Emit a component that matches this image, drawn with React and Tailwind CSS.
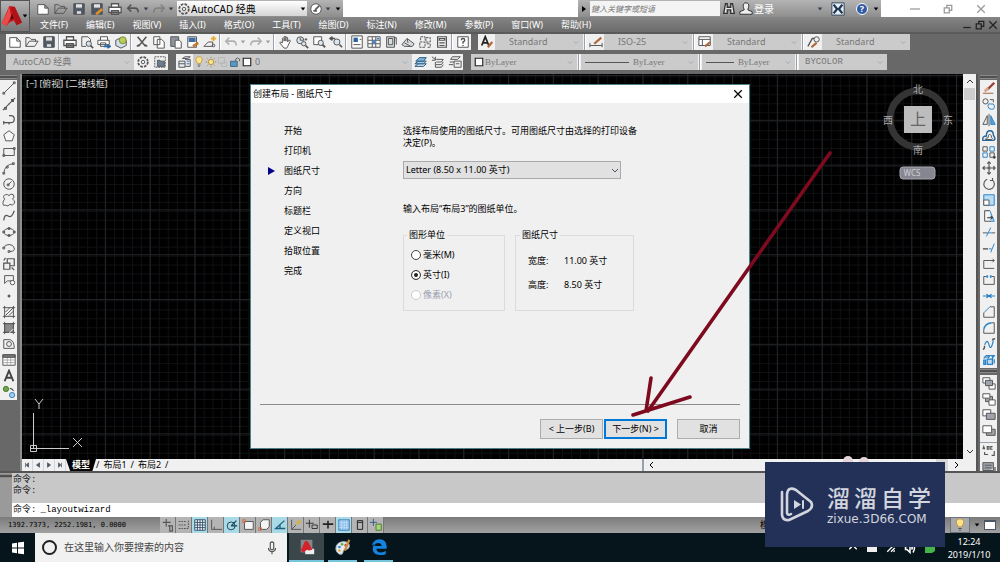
import React from 'react';

const icons = {
  newFile: <path d="M2 3h8l4 4v7H2zM10 3v4h4" fill="#fff" />,
  open: <path d="M1 13V3h4l2 2h5v3M1 13l4-6h10l-4 6z" />,
  save: (
    <g>
      <path d="M2 2h12v12H2z" fill="#4b5666" />
      <path d="M4 2h8v5H4zM5 10h6v4H5z" fill="#dfe3e8" />
    </g>
  ),
  saveAs: (
    <g>
      <path d="M2 2h12v12H2z" fill="#4b5666" />
      <path d="M4 2h8v5H4z" fill="#dfe3e8" />
      <path d="M7 14l7-6" stroke="#e0902b" strokeWidth="3" />
    </g>
  ),
  print: <path d="M4 6V2h8v4M1 6h14v6H1zM4 10h8v4H4z" fill="#fff" strokeWidth="1.5" />,
  preview: (
    <g>
      <path d="M2 2h7l3 3v3M2 2v11h5" />
      <circle cx="10" cy="10" r="3" fill="#cfe0ee" />
      <path d="M12 12l3 3" strokeWidth="2" />
    </g>
  ),
  publish: (
    <g>
      <path d="M4 6V2h8v4M1 6h13v5H1zM4 9h6v4H4z" fill="#fff" />
      <path d="M8 13h6M12 11l3 2-3 2" stroke="#2368a8" strokeWidth="2" />
    </g>
  ),
  web: (
    <g>
      <path d="M2 6l6-3 6 3v6l-6 3-6-3z" fill="#cfe0ee" />
      <circle cx="10" cy="6" r="4" fill="#b9cb58" stroke="#7c8c35" />
    </g>
  ),
  cut: <path d="M3 2l9 11M13 2L4 13M2 13l3-2M14 13l-3-2" strokeWidth="1.8" />,
  copyDoc: <path d="M2 2h7v9H2zM6 5h5l3 3v7H6z" fill="#fff" />,
  paste: (
    <g>
      <path d="M2 2h9v11H2z" fill="#8d949c" />
      <path d="M7 6h5l2 2v7H7z" fill="#fff" />
    </g>
  ),
  match: (
    <g>
      <path d="M2 2h10v12H2z" fill="#fff" />
      <path d="M3 3h8v5H3z" fill="#3f6da3" stroke="none" />
      <path d="M8 13l6-4" stroke="#c47b35" strokeWidth="3" />
    </g>
  ),
  blockEdit: (
    <g>
      <path d="M1 13h10V8H6M1 13l5-5" />
      <path d="M12 1v6M9 4h6" stroke="#e7a92e" strokeWidth="2" />
      <circle cx="12" cy="12" r="1.500" />
    </g>
  ),
  undo: <path d="M6 3L2 7l4 4M2 7h8q4 0 4 5" strokeWidth="1.800" />,
  redo: <path d="M10 3l4 4-4 4M14 7H6q-4 0-4 5" strokeWidth="1.800" />,
  pan: <path d="M5 9V4q1-2 2 0v3V2q1-1 2 0v5V3q1-1 2 0v5l1-2q2-1 2 1l-3 6-1 2H7L2 9q0-2 3 0z" fill="#fff" />,
  zoomRt: (
    <g>
      <circle cx="6" cy="6" r="4" fill="#dce6ee" />
      <path d="M6 3v3h3M11 5h3M12.500 3.500v3" />
      <circle cx="10" cy="10" r="2.500" fill="#dce6ee" />
      <path d="M12 12l3 3" strokeWidth="2" />
    </g>
  ),
  zoomWin: (
    <g>
      <path d="M2 2h9v9H2z" fill="#fff" />
      <circle cx="10" cy="9" r="3" fill="#dce6ee" />
      <path d="M12 11l3 3" strokeWidth="2.200" />
    </g>
  ),
  zoomPrev: (
    <g>
      <circle cx="9" cy="8" r="3.500" fill="#dce6ee" />
      <path d="M12 11l3 3M1 4h6M4 2L1 4l3 2" strokeWidth="1.800" />
    </g>
  ),
  properties: (
    <g>
      <path d="M2 1h12v14H2z" fill="#fff" />
      <path d="M4 3h5v5H4z" fill="#2e63a2" stroke="none" />
      <path d="M4 11h8M11 5h2" />
    </g>
  ),
  designCenter: (
    <g>
      <path d="M1 2h14v12H1zM1 6h14M6 2v12M10 2v12M1 10h14" fill="#fff" />
      <path d="M6 6h4v4H6zM11 3h3v2h-3z" fill="#4d86bd" stroke="none" />
    </g>
  ),
  palettes: <path d="M3 2h9v12H3zM12 3h2v8M5 4h5v7H5z" fill="#d8dcdf" />,
  sheetSet: <path d="M1 11l6-7 8 6-2 3H4zM4 9l7 4M7 4l1 5" fill="#d8dcdf" />,
  markup: <path d="M3 6V2h5v4M9 3h5v5H9zM2 8h6v6H2zM10 10h4v4h-4" strokeDasharray="3 1" />,
  calc: <path d="M3 2h10v12H3zM5 4h6v2H5zM5 9h6M5 12h6" strokeWidth="1.400" />,
  help: (
    <g>
      <path d="M2 2h12v12H2z" fill="#fff" />
      <path d="M6 6q0-2 2-2t2 2q0 1-2 2v2M8 11.500v1" strokeWidth="1.600" />
    </g>
  ),
  gear: (
    <g>
      <circle cx="8" cy="8" r="5.500" strokeWidth="2" strokeDasharray="3 1.300" />
      <circle cx="8" cy="8" r="2" />
    </g>
  ),
  compass: (
    <g>
      <circle cx="8" cy="8" r="6" fill="#fff" />
      <path d="M7 9l5-5M5 10h4" strokeWidth="2" />
    </g>
  ),
  wsSettings: (
    <g>
      <path d="M2 2h12v12H2z" strokeDasharray="2 1" />
      <path d="M5 6h3l1 1h4v6H5z" fill="#6b7d93" />
    </g>
  ),
  layers: (
    <g>
      <path d="M5 4l3-2h6l-3 2zM1 7h7v7H1zM1 10h7M8 5h6v8H8" fill="#e5ebf2" />
      <path d="M10 7h3M10 10h3" stroke="#2e63a2" />
    </g>
  ),
  bulb: (
    <g>
      <path d="M8 1q5 0 4 5l-2 4H6L4 6q-1-5 4-5z" fill="#ffe38a" stroke="#b9974a" />
      <path d="M6 12h4M7 14h2" />
    </g>
  ),
  sun: (
    <g stroke="#a88a3c">
      <circle cx="8" cy="8" r="3.500" fill="#ffe38a" />
      <path d="M8 1v2M8 13v2M1 8h2M13 8h2M3 3l1.500 1.500M11.500 11.500L13 13M13 3l-1.500 1.500M4.500 11.500L3 13" />
    </g>
  ),
  vpFreeze: <path d="M2 2h8v8H2zM6 8h7v6H6z" stroke="#b4b4b4" />,
  lock: (
    <g>
      <path d="M2 7h9v7H2z" fill="#5c96bd" stroke="#33607f" />
      <path d="M9 7V4q2-3 5 0v3" />
    </g>
  ),
  swatch: <path d="M3 3h10v10H3z" fill="#fff" stroke="#222" strokeWidth="1.500" />,
  layerCur: (
    <g stroke="#28567c">
      <path d="M1 13l4-3h9l-3 3z" fill="#cfe3f3" />
      <path d="M1 10l4-3h9l-3 3z" fill="#a5cbe8" />
      <path d="M2 7l4-4h8l-3 4z" fill="#7fb4dc" />
    </g>
  ),
  layerPrev: <path d="M1 2l4 3M5 2v4H1M6 5h8l-2 3H6M5 8v3h7l2-3M5 11v3h7l2-3" />,
  layerState: <path d="M5 2h9l-3 3H3zM2 8h5M1 11h5M7 7h8v7H7zM9 10h4" fill="#eef1f4" />,
  textStyle: (
    <g>
      <path d="M2 12L6 2l4 10M3 9h6" strokeWidth="2" stroke="#222" />
      <path d="M9 14l5-6" stroke="#b0683a" strokeWidth="2.500" />
    </g>
  ),
  dimStyle: (
    <g>
      <path d="M1 9v5M15 9v5M1 12h14" />
      <path d="M6 10l8-7" stroke="#b0683a" strokeWidth="2.500" />
    </g>
  ),
  tableStyle: (
    <g>
      <path d="M1 2h13v10H1zM1 5h13M5 5v7" fill="#fff" />
      <path d="M8 13l6-5" stroke="#b0683a" strokeWidth="2.500" />
    </g>
  ),
  leaderStyle: (
    <g>
      <path d="M1 13L6 4h3" strokeWidth="1.500" />
      <circle cx="11" cy="5" r="3" fill="#eee" />
      <path d="M5 14l6-5" stroke="#b0683a" strokeWidth="2.500" />
    </g>
  ),
  line: <path d="M2 14L14 2M1 13h2v2H1zM13 1h2v2h-2z" />,
  xline: <path d="M1 15L15 1M3 12h2v2H3zM7 8h2M11 3h2v2h-2z" strokeWidth="1.300" />,
  pline: <path d="M8 3h2q4 0 4 4t-4 4H2M2 9v4M8 11v2" strokeWidth="1.400" />,
  polygon: <path d="M8 2l6 4.500-2.300 7H4.300L2 6.500z" fill="#f6f6f6" />,
  rect: <path d="M2 4h12v8H2zM1 11h2v2H1zM13 3h2v2h-2z" />,
  arc: <path d="M2 14Q3 4 13 3M1 13h2v2H1zM5 6h2v2H5zM12 2h2v2h-2z" />,
  circle: (
    <g>
      <circle cx="8" cy="8" r="6" />
      <path d="M7 9l4-4M6 8h2v2H6z" />
    </g>
  ),
  cloud: <path d="M3 7Q0 3 4 2q3-1 4 1 2-3 5-1 2 3-1 5 4 2 2 5-2 3-5 1-2 3-5 1-3 1-3-2 0-3 2-5z" />,
  spline: <path d="M2 13q1-8 5-5t7-6" strokeWidth="1.400" />,
  ellipse: (
    <g>
      <ellipse cx="8" cy="8" rx="6" ry="4" />
      <path d="M7 3h2v2H7zM1 7h2v2H1zM13 7h2v2h-2zM7 11h2v2H7z" />
    </g>
  ),
  ellipseArc: <path d="M2 8q1-4 6-4t6 4-5 4M7 11h2v2H7zM1 7h2v2H1z" />,
  insertBlock: <path d="M2 7h7v7H2zM6 7V2h8v8H9M2 4l2-3M11 12l3 3" strokeWidth="1.400" />,
  makeBlock: (
    <g>
      <path d="M3 3h10v6H6L3 12z" />
      <circle cx="12" cy="11" r="2.500" fill="#fff" />
    </g>
  ),
  point: <path d="M7 7h2v2H7z" fill="#555" />,
  hatch: <path d="M3 1v14M13 1v14M1 3h14M1 13h14M4 8l5-5M4 12l9-9M8 12l5-5" />,
  gradient: (
    <g>
      <path d="M3 3h10v10H3z" fill="#8b8b8b" />
      <path d="M3 1v14M13 1v14M1 3h14M1 13h14" />
      <path d="M8 14l5-5" stroke="#eee" />
    </g>
  ),
  region: (
    <g>
      <path d="M2 3h7q5 1 5 10H2z" />
      <circle cx="8" cy="8" r="2.800" />
    </g>
  ),
  table: (
    <g>
      <path d="M1 2h14v12H1z" fill="#fff" />
      <path d="M1 8h14M1 11h14M6 5v9M10 5v9" stroke="#aaa" />
      <path d="M1 2h14v3H1z" fill="#777" />
    </g>
  ),
  mtext: <path d="M3 14L8 2l5 12M5 10h6" strokeWidth="2.200" stroke="#444" />,
  addSelected: (
    <g>
      <circle cx="4.500" cy="4.500" r="3" fill="#6fa64b" stroke="#477a2c" />
      <circle cx="11.500" cy="11.500" r="3" fill="#9fcdf0" stroke="#3c82b7" />
      <path d="M9 4q4 0 4 3" stroke="#222" />
    </g>
  ),
  erase: (
    <g>
      <path d="M6 10l8-8" stroke="#9b4034" strokeWidth="2.800" />
      <path d="M3 12l4-4" stroke="#d9a78a" strokeWidth="3" />
      <path d="M1 14h12" stroke="#a06040" />
    </g>
  ),
  copy: (
    <g>
      <circle cx="4" cy="5" r="3" />
      <path d="M9 3h4v3" />
      <path d="M7 9q0-2 3-1 4-1 4 2 1 4-3 4-4 0-4-3z" stroke="#2b83c6" />
    </g>
  ),
  mirror: (
    <g>
      <path d="M6 3v10H1z" />
      <path d="M10 3v10h5z" fill="#5aa3dc" stroke="#2b83c6" />
      <path d="M8 1v14" />
    </g>
  ),
  offset: (
    <g>
      <path d="M1 13q-1-5 4-5 0-6 4-6 4 0 4 5 4 6-1 6z" stroke="#24659b" strokeWidth="1.600" />
      <path d="M4 12q0-2 3-2 0-4 2-4 2 1 2 4 2 1 0 2z" />
    </g>
  ),
  array: (
    <g>
      <path d="M1 2h5v5H1zM9 9h5v5H9z" />
      <path d="M9 2h5v5H9zM1 9h5v5H1z" stroke="#2b83c6" />
      <path d="M13 13h2v2h-2z" fill="#111" />
    </g>
  ),
  move: <path d="M8 1v5M8 10v5M1 8h5M10 8h5M6 3l2-2 2 2M6 13l2 2 2-2M3 6L1 8l2 2M13 6l2 2-2 2M7 7h2v2H7z" strokeWidth="1.300" />,
  rotate: <path d="M6 2.500A6 6 0 1 0 12 3.500M12 1v3H9" strokeWidth="1.300" />,
  scale: (
    <g>
      <path d="M2 2h12v12H2z" fill="#b9dcf5" stroke="#2b83c6" />
      <path d="M2 8h6v6H2z" fill="#fff" />
    </g>
  ),
  stretch: (
    <g>
      <path d="M3 2h6l5 12H9" fill="#b9dcf5" stroke="#2b83c6" />
      <path d="M9 2H3v12h7" fill="#f4f4f4" />
      <path d="M6 10h6M10 8l2 2-2 2" stroke="#222" />
    </g>
  ),
  trim: (
    <g>
      <path d="M1 9h5M11 9h4" />
      <path d="M5 13l5-10M6 9h5" stroke="#2b83c6" />
    </g>
  ),
  extend: (
    <g>
      <path d="M1 9h6" strokeWidth="1.600" />
      <path d="M8 9h3M10 13l4-10" stroke="#2b83c6" />
    </g>
  ),
  breakPt: <path d="M14 13H2V4h12M12 2l2 2-2 2" />,
  breakGap: (
    <g>
      <path d="M5 4H2v9h12V4h-3" />
      <path d="M5 4h2M9 4h2" stroke="#2b83c6" strokeWidth="3" />
    </g>
  ),
  join: <path d="M1 8h14M5 6l3 2-3 2M11 6L8 8l3 2" stroke="#2b83c6" strokeWidth="1.400" />,
  chamfer: (
    <g>
      <path d="M2 9v5h12V2H9" />
      <path d="M2 9l7-7" stroke="#2b83c6" />
    </g>
  ),
  fillet: (
    <g>
      <path d="M2 10v4h12V2h-3" />
      <path d="M2 10q1-7 9-8" stroke="#2b83c6" strokeWidth="1.500" />
    </g>
  ),
  blend: (
    <g>
      <path d="M1 14q2 0 2-4M12 4q0-2 3-2" strokeWidth="1.600" />
      <path d="M3 9q3-8 5 0t5-5" stroke="#2b83c6" strokeWidth="1.300" />
    </g>
  ),
  explode: (
    <g stroke="#2b83c6">
      <path d="M6 7h6v6H6z" fill="#b9dcf5" strokeWidth="1.500" />
      <path d="M2 6l3-3h4L7 6M10 3h4l-1 2M2 8h2v5H2zM14 7v5M12 7V4" fill="#7db9e6" strokeWidth="1.400" />
    </g>
  ),
  front: (
    <g>
      <path d="M1 2h8v6H1zM8 9h7v6H8z" fill="#fff" />
      <path d="M4 5h8v6H4z" fill="#9fa3ab" />
    </g>
  ),
  back: (
    <g>
      <path d="M4 5h8v6H4z" fill="#9fa3ab" />
      <path d="M1 2h8v5H1zM8 9h7v6H8z" fill="#fff" />
    </g>
  ),
  above: (
    <g>
      <path d="M1 2h9v7H1z" fill="#fff" />
      <path d="M5 6h10v7H5z" fill="#9fa3ab" />
    </g>
  ),
  under: (
    <g>
      <path d="M5 6h10v7H5z" fill="#9fa3ab" />
      <path d="M1 2h10v8H1z" fill="#fff" />
    </g>
  ),
  annoFront: <path d="M1 6l1-3 1 3M6 3v3h2V3zM12 3h-2v3h2M14 8v5h-3M3 9v3h4" strokeWidth="1.300" />,
  hatchBack: <path d="M1 3h12v9H1zM4 15h11V8M3 6h8M3 9h8" fill="#9fa3ab" />,
  infer: <path d="M6 1v9M2 5h9M10 8v7h3V9h-5" strokeWidth="1.300" />,
  snap: <path d="M2 4h8M2 8h8M2 12h12M13 3v9" strokeDasharray="2 1" />,
  grid: <path d="M2 2h12v12H2zM2 5h12M2 8h12M2 11h12M5 2v12M8 2v12M11 2v12" fill="#fff" stroke="#33506b" />,
  ortho: <path d="M3 2v11h12M6 13v-3" />,
  polar: (
    <g stroke="#1f4256">
      <circle cx="7" cy="9" r="4.500" />
      <path d="M7 9l6-6M7 9h7" strokeWidth="1.500" />
    </g>
  ),
  osnap: (
    <g>
      <path d="M4 4h10v9H4z" fill="#f5f5f5" />
      <path d="M2 2h3v3H2z" stroke="#cf6d4a" />
    </g>
  ),
  osnap3d: (
    <g>
      <path d="M4 5l3-3h7v8l-3 3H4z" fill="#f5f5f5" />
      <path d="M2 11h3v3H2z" stroke="#cf6d4a" />
    </g>
  ),
  otrack: <path d="M13 3L3 12h11M8 8v4" stroke="#1f5f80" strokeWidth="1.500" />,
  ducs: (
    <g>
      <path d="M3 2v11h11M3 13l5-5" />
      <path d="M9 7l4-4" stroke="#d8b238" strokeWidth="3" />
    </g>
  ),
  dyn: <path d="M5 2v9M1 6h9M8 8h6v4H8z" stroke="#333" />,
  lwt: <path d="M8 3v9M2 7h12" stroke="#222" strokeWidth="1.800" />,
  tpy: (
    <g>
      <path d="M2 2h12v12H2z" fill="#8fc2ee" stroke="#3f7fb8" />
      <path d="M2 5h12M2 8h12M2 11h12M5 2v12M8 2v12M11 2v12" stroke="#d4e8f8" strokeDasharray="1 1" />
    </g>
  ),
  qp: <path d="M5 3h6v10H5zM5 5h6" stroke="#222" />,
  sc: (
    <g>
      <path d="M8 7h6v7H8z" fill="#a7d27e" stroke="#4d7d2a" />
      <path d="M5 1v8M1 5h8" stroke="#345e8a" />
    </g>
  ),
  binoculars: <path d="M4 2h2v4h4V2h2l2 11h-4V9H6v4H2z" fill="#e8e8e8" stroke="#333" strokeWidth="1.500" />,
  user: <path d="M8 1q4 0 3 5-1 3-1 3l5 2v3H1v-3l5-2-1-3Q4 1 8 1z" fill="#eee" stroke="#333" />,
  exchange: (
    <g>
      <path d="M1 1h14v14H1z" fill="#e8eef4" stroke="#30455c" />
      <path d="M3 3l4 5-4 5M13 3L9 8l4 5" stroke="#1d3550" strokeWidth="2.600" />
    </g>
  ),
};

const font = 'font-["Noto_Sans","Noto_Sans_CJK_SC",sans-serif]';

const Icon = ({ name, className = 'size-3.5' }) => (
  <svg viewBox="0 0 16 16" fill="none" stroke="#555" strokeWidth="1.1" className={`${className} shrink-0`}>
    {icons[name]}
  </svg>
);

const ToolButton = ({ name, faded }) => (
  <button
    type="button"
    aria-label={name}
    className={`flex h-4 w-[17px] shrink-0 items-center justify-center ${faded ? 'opacity-40' : ''}`}
  >
    <Icon name={name} />
  </button>
);

const Divider = () => <span className="mx-px w-0.5 shrink-0 border-l border-gray-400 bg-white" />;

const Caret = ({ className = 'text-gray-700' }) => (
  <svg viewBox="0 0 8 8" className={`mx-px size-1.5 shrink-0 self-center ${className}`}>
    <path d="M1 2h6L4 6z" fill="currentColor" />
  </svg>
);

const Chevron = ({ className = 'size-2', d = 'M1 3l3 3 3-3' }) => (
  <svg viewBox="0 0 8 8" fill="none" stroke="currentColor" className={`shrink-0 ${className}`}>
    <path d={d} />
  </svg>
);

const Combo = ({ label, value, width, pad = 'pl-1', className = '', before }) => (
  <div className={`relative flex h-4 items-center bg-[#cbcbcb] text-[#777] ${width}`}>
    {before}
    <select
      aria-label={label}
      disabled
      className={`h-full min-w-0 flex-1 appearance-none bg-transparent text-[9px] leading-4 ${pad} ${className}`}
    >
      <option>{value}</option>
    </select>
    <Chevron className="mr-1 size-1.5 text-gray-400" />
  </div>
);

const menus = [
  '文件(F)', '编辑(E)', '视图(V)', '插入(I)', '格式(O)', '工具(T)',
  '绘图(D)', '标注(N)', '修改(M)', '参数(P)', '窗口(W)', '帮助(H)',
];

const standardTools = [
  'newFile', 'open', 'save', '|', 'print', 'preview', 'publish', 'web', '|',
  'cut', 'copyDoc', 'paste', 'match', 'blockEdit', '|', 'undo', 'v', 'redo', 'v', '|',
  'pan', 'zoomRt', 'zoomWin', 'zoomPrev', '|',
  'properties', 'designCenter', 'palettes', 'sheetSet', 'markup', 'calc', '|', 'help',
];

const styleCombos = [
  { icon: 'textStyle', label: '文字样式', value: 'Standard' },
  { icon: 'dimStyle', label: '标注样式', value: 'ISO-25' },
  { icon: 'tableStyle', label: '表格样式', value: 'Standard' },
  { icon: 'leaderStyle', label: '引线样式', value: 'Standard' },
];

const drawTools = [
  'line', 'xline', 'pline', 'polygon', 'rect', 'arc', 'circle', 'cloud', 'spline', 'ellipse',
  'ellipseArc', 'insertBlock', 'makeBlock', 'point', 'hatch', 'gradient', 'region', 'table', 'mtext', 'addSelected',
];

const modifyTools = [
  'erase', 'copy', 'mirror', 'offset', 'array', 'move', 'rotate', 'scale', 'stretch',
  'trim', 'extend', 'breakPt', 'breakGap', 'join', 'chamfer', 'fillet', 'blend', 'explode',
];

const statusTools = [
  'infer', 'snap', 'grid', 'ortho', 'polar', 'osnap', 'osnap3d',
  'otrack', 'ducs', 'dyn', 'lwt', 'tpy', 'qp', 'sc',
];
const activeStatus = ['grid', 'polar', 'otrack', 'tpy'];

const AppLogo = ({ className }) => (
  <svg viewBox="0 0 24 24" className={className}>
    <path d="M9 1l6 1 8 17-6 3-3-5-5 2-3 4-5-3z" fill="#c2161c" />
    <path d="M9 1L7 7 1 20l5 3 5-11z" fill="#ea4b48" />
    <path d="M12 9l2 6-4 1z" fill="#5d0b0e" />
    <path d="M15 2l8 17-6 3-6-19z" fill="#8f0f14" opacity=".4" />
  </svg>
);

const TitleBar = () => (
  <div className="flex h-[17px] bg-white">
    <div className="flex w-[313px] shrink-0 items-center bg-linear-to-b from-[#b4b4b4] to-[#8e8e8e] pl-1">
      {['newFile', 'open', 'save', 'saveAs', 'print', 'undo'].map((name) => (
        <span key={name} className="flex w-[18px]">
          <ToolButton name={name} />
        </span>
      ))}
      <Caret />
      <ToolButton name="redo" faded />
      <Caret />
      <div className="ml-0.5 flex h-[15px] flex-1 items-center bg-linear-to-b from-white to-[#d5d5d5]">
        <Icon name="gear" />
        <select aria-label="工作空间" className="min-w-0 flex-1 appearance-none bg-transparent text-[10px] leading-[14px] text-black">
          <option>AutoCAD 经典</option>
        </select>
        <Caret className="text-black" />
      </div>
      <ToolButton name="compass" />
      <Caret />
      <span className="w-0.5" />
      <Caret className="mr-0.5 text-black" />
    </div>
    <div className="flex-1" />
    <div className="flex w-[303px] shrink-0 items-center bg-linear-to-b from-[#b4b4b4] to-[#8e8e8e]">
      <svg viewBox="0 0 8 8" className="mx-0.5 size-2"><path d="M2 1l4 3-4 3z" /></svg>
      <input
        aria-label="搜索"
        placeholder="键入关键字或短语"
        className="h-[15px] w-[130px] bg-[#f4f4f4] px-px text-[8px] italic placeholder:text-[#777]"
      />
      <ToolButton name="binoculars" />
      <ToolButton name="user" />
      <a href="#login" className="text-[10px] leading-4 text-white">登录</a>
      <span className="flex-1" />
      <Caret className="mr-1.5 text-gray-700" />
      <ToolButton name="exchange" />
      <button type="button" aria-label="帮助" className="mr-1 ml-2.5 size-3 rounded-full border border-white bg-[#2f58a5] text-center text-[9px] leading-[10px] font-bold text-white">
        ?
      </button>
      <Caret className="mr-0.5" />
    </div>
    <div className="flex w-[119px] shrink-0 items-center justify-between pr-3.5 pl-[29px] text-[#999]">
      <Chevron d="M0 4h8" className="size-2.5" />
      <Chevron d="M1 3h4v4H1zM3 3V1h4v4H5" className="size-2.5" />
      <Chevron d="M1 1l6 6M7 1L1 7" className="size-2.5" />
    </div>
  </div>
);

const MenuBar = () => (
  <div className="flex h-[15px] items-center bg-linear-to-b from-[#858585] to-[#6b6b6b] pl-2.5">
    <nav className="flex gap-[18px]">
      {menus.map((menu) => (
        <button key={menu} type="button" className="text-[9px] leading-[15px] whitespace-nowrap text-white">
          {menu}
        </button>
      ))}
    </nav>
    <div className="ml-auto flex gap-[3px] pr-0.5 text-[#222]">
      <Chevron d="M1 6h6" className="size-2.5" />
      <Chevron d="M1 3h4v4H1zM3 3V1h4v4H5" className="size-2.5" />
      <Chevron d="M1 1l6 6M7 1L1 7" className="size-2.5" />
    </div>
  </div>
);

const ToolbarRows = () => (
  <div className="flex flex-col gap-1 border-t-2 border-[#5a5a5a] pb-1 pl-1.5">
    <div className="flex h-4 gap-[7px]">
      <div className="flex bg-[#f0f0f0]">
        {standardTools.map((tool, i) => {
          if (tool === '|') return <Divider key={i} />;
          if (tool === 'v') return <Caret key={i} className="text-gray-400" />;
          return <ToolButton key={i} name={tool} faded={tool === 'undo' || tool === 'redo'} />;
        })}
      </div>
      <div className="flex bg-[#f0f0f0]">
        {styleCombos.map(({ icon, label, value }, i) => (
          <React.Fragment key={icon}>
            {i > 0 && <Divider />}
            <ToolButton name={icon} />
            <Combo label={label} value={value} width="w-[88px]" pad="pl-3.5" />
          </React.Fragment>
        ))}
      </div>
    </div>
    <div className="flex h-4 gap-2">
      <div className="flex bg-[#f0f0f0]">
        <Combo label="工作空间" value="AutoCAD 经典" width="w-[128px]" pad="pl-[7px]" />
        <ToolButton name="gear" />
        <ToolButton name="wsSettings" />
      </div>
      <div className="flex bg-[#f0f0f0]">
        <ToolButton name="layers" />
        <Combo
          label="图层"
          value="0"
          width="w-[219px]"
          pad="pl-0.5"
          before={['bulb', 'sun', 'vpFreeze', 'lock', 'swatch'].map((name) => (
            <Icon key={name} name={name} className="size-3" />
          ))}
        />
        <ToolButton name="layerCur" />
        <ToolButton name="layerPrev" />
        <ToolButton name="layerState" />
      </div>
      <div className="flex bg-[#f0f0f0]">
        <Combo label="颜色" value="ByLayer" width="w-[106px]" pad="pl-0" className="font-['Liberation_Serif',serif]" before={<Icon name="swatch" className="ml-0.5 size-3" />} />
        <Divider />
        <Combo label="线型" value="ByLayer" width="w-[117px]" className="font-['Liberation_Serif',serif]" before={<span className="ml-1 h-px w-11 bg-[#555]" />} />
        <Divider />
        <Combo label="线宽" value="ByLayer" width="w-[93px]" className="font-['Liberation_Serif',serif]" before={<span className="ml-1 h-px w-7 bg-[#555]" />} />
        <Divider />
        <Combo label="打印样式" value="BYCOLOR" width="w-[88px]" pad="pl-1.5" className="font-['Liberation_Mono',monospace]" />
      </div>
    </div>
  </div>
);

const Grip = () => <div className="my-px h-1 w-[17px] shrink-0 border-y border-[#888] bg-[#505050]" />;

const ToolColumn = ({ tools }) => (
  <div className="flex w-[17px] flex-col items-center bg-[#f0f0f0]">
    {tools.map((name) => (
      <ToolButton key={name} name={name} />
    ))}
  </div>
);

const ViewCube = () => (
  <svg viewBox="0 0 76 104" className="absolute top-[7px] right-[7px] h-[104px] w-[76px]" fontSize="10" textAnchor="middle">
    <circle cx="38" cy="38" r="28" fill="none" stroke="#343434" strokeWidth="7" />
    <rect x="24" y="25" width="28" height="27" fill="#bdbdbd" />
    <text x="38" y="44" fontSize="16" fill="#666">上</text>
    <g fill="#aaa">
      <text x="38" y="12">北</text>
      <text x="38" y="73">南</text>
      <text x="8" y="43">西</text>
      <text x="68" y="43">东</text>
    </g>
    <rect x="20" y="86" width="35" height="12" rx="3" fill="#85868f" stroke="#a5a6b0" />
    <text x="32" y="95" fontSize="8" fill="#cfcfd6">WCS</text>
  </svg>
);

const Drawing = () => (
  <div className="relative min-h-0 flex-1 bg-black">
    <svg className="absolute inset-0 size-full">
      <defs>
        <pattern id="minor" width="8.960" height="8.960" x="2.400" y="2.400" patternUnits="userSpaceOnUse">
          <path d="M0 .5h8.960M.5 0v8.960" stroke="#0f1013" />
        </pattern>
        <pattern id="major" width="44.800" height="44.800" x="38" y="1" patternUnits="userSpaceOnUse">
          <path d="M0 .5h44.800M.5 0v44.800" stroke="#232427" />
        </pattern>
      </defs>
      <rect width="100%" height="100%" fill="url(#minor)" />
      <rect width="100%" height="100%" fill="url(#major)" />
    </svg>
    <p className="relative pt-1 pl-1 text-[9px] leading-3 text-[#ddd]">[−] [俯视] [二维线框]</p>
    <ViewCube />
    <svg viewBox="0 0 56 54" className="absolute bottom-[7px] left-1.5 h-[54px] w-14" fill="none" stroke="#ccc">
      <path d="M5.500 15v36M2 50.500h39M2.500 47.500h6v6h-6z" />
      <path d="M7 1l4 5 4-5M11 6v5M45 40l9 9M54 40l-9 9" />
    </svg>
  </div>
);

const LayoutTabs = () => (
  <div className="flex h-3 shrink-0 items-center bg-[#f0f0f0] text-[9px] leading-3 text-black">
    {['M2 1v6M6 1L3 4l3 3z', 'M6 1L2 4l4 3z', 'M2 1l4 3-4 3z', 'M6 1v6M2 1l3 3-3 3z'].map((d) => (
      <span key={d} className="flex h-full w-[11px] items-center justify-center border-r border-gray-300 text-gray-600">
        <Chevron d={d} className="size-1.5 fill-current" />
      </span>
    ))}
    <button type="button" className="h-full bg-black px-1.5 font-bold text-white [clip-path:polygon(0_0,100%_0,88%_100%,14%_100%)]">
      模型
    </button>
    <span>/</span>
    <button type="button" className="px-1">布局1</button>
    <span>/</span>
    <button type="button" className="px-1">布局2</button>
    <span>/</span>
    <div className="ml-auto flex w-[35%] items-center border-l-2 border-gray-400 pr-4 pl-1">
      <Chevron d="M5 1L2 4l3 3" />
      <span className="mr-1 ml-auto size-3 bg-[#d6d6d6]" />
      <Chevron d="M3 1l3 3-3 3" />
    </div>
  </div>
);

const steps = ['开始', '打印机', '图纸尺寸', '方向', '标题栏', '定义视口', '拾取位置', '完成'];

const units = [
  { label: '毫米(M)' },
  { label: '英寸(I)', checked: true },
  { label: '像素(X)', disabled: true },
];

const WizardDialog = () => (
  <section
    role="dialog"
    aria-label="创建布局 - 图纸尺寸"
    className="absolute top-2.5 left-[228px] flex h-[365px] w-[500px] flex-col border border-[#4d7f88] bg-[#f0f0f0] text-[9px] leading-3 text-black"
  >
    <header className="flex h-[18px] shrink-0 items-center justify-between bg-white pr-1.5 pl-0.5">
      <h1>创建布局 - 图纸尺寸</h1>
      <button type="button" aria-label="关闭"><Chevron d="M1 1l6 6M7 1L1 7" className="size-2.5" /></button>
    </header>
    <div className="flex flex-1">
      <ol className="w-[152px] pt-[18px] pl-4">
        {steps.map((step) => (
          <li key={step} className="flex h-5 items-center">
            <svg viewBox="0 0 8 8" className="mr-[9px] size-2">
              {step === '图纸尺寸' && <path d="M1 0l7 4-7 4z" fill="#00008b" />}
            </svg>
            {step}
          </li>
        ))}
      </ol>
      <div className="pt-[22px]">
        <label htmlFor="paper-size" className="block">
          选择布局使用的图纸尺寸。可用图纸尺寸由选择的打印设备
          <br />
          决定(P)。
        </label>
        <div className="relative mt-3 flex w-[218px] items-center">
          <select id="paper-size" className="h-[18px] w-full appearance-none border border-[#aaa] bg-[#e1e1e1] pl-0.5">
            <option>Letter (8.50 x 11.00 英寸)</option>
          </select>
          <Chevron className="absolute right-0.5 size-2 text-gray-600" />
        </div>
        <p className="mt-6">输入布局“布局3”的图纸单位。</p>
        <div className="mt-3.5 flex gap-2.5">
          <fieldset className="h-[82px] w-[102px] border border-[#dcdcdc] pt-1 pl-[7px]">
            <legend className="-ml-1 px-0.5">图形单位</legend>
            {units.map(({ label, checked, disabled }) => (
              <label key={label} className={`flex h-5 items-center gap-0.5 ${disabled ? 'text-gray-400' : ''}`}>
                <input
                  type="radio"
                  name="unit"
                  defaultChecked={checked}
                  disabled={disabled}
                  className="size-2.5 appearance-none rounded-full border border-[#444] bg-white checked:bg-[#222] checked:shadow-[inset_0_0_0_2px_white] disabled:border-[#ccc]"
                />
                {label}
              </label>
            ))}
          </fieldset>
          <fieldset className="h-[82px] w-[119px] border border-[#dcdcdc] pl-3">
            <legend className="-ml-2 px-0.5">图纸尺寸</legend>
            <dl className="grid grid-cols-[36px_auto] gap-y-3 pt-3.5">
              <dt>宽度:</dt>
              <dd>11.00 英寸</dd>
              <dt>高度:</dt>
              <dd>8.50 英寸</dd>
            </dl>
          </fieldset>
        </div>
      </div>
    </div>
    <footer className="mx-[9px] flex justify-end border-t border-[#8c8c8c] pt-3.5 pb-[9px]">
      <button type="button" className="h-5 w-[63px] border border-[#adadad] bg-[#e1e1e1]">&lt; 上一步(B)</button>
      <button type="button" className="ml-px h-5 w-[63px] border-2 border-[#0078d7] bg-[#e1e1e1]">下一步(N) &gt;</button>
      <button type="button" className="ml-2.5 h-5 w-[63px] border border-[#adadad] bg-[#e1e1e1]">取消</button>
    </footer>
  </section>
);

const CommandLine = () => (
  <div className="flex h-[46px] shrink-0 border-t-2 border-[#555] bg-[#9a9a9a] font-['Liberation_Mono','Noto_Sans_CJK_SC',monospace] text-[9px] text-[#222]">
    <div className="w-3 shrink-0 overflow-hidden">
      <Grip />
    </div>
    <div className="flex flex-1 flex-col bg-[#c8c8c8] pt-0.5 leading-[11px]">
      <p className="pl-px">命令:</p>
      <p className="pl-px">命令:</p>
      <label className="mt-auto flex h-3.5 items-center bg-white pl-px">
        命令:
        <input defaultValue="_layoutwizard" className="ml-1 flex-1 text-black outline-none" />
      </label>
    </div>
  </div>
);

const StatusBar = () => (
  <div className="flex h-4 shrink-0 items-center bg-linear-to-b from-[#7b7b7b] to-[#a2a2a2]">
    <span className="w-40 pl-2 font-['DejaVu_Sans_Mono',monospace] text-[7px] whitespace-nowrap text-black">
      1392.7373, 2252.1981, 0.0000
    </span>
    {statusTools.map((name) => (
      <button
        key={name}
        type="button"
        aria-label={name}
        className={`flex size-4 items-center justify-center border-r border-[#777] ${activeStatus.includes(name) ? 'bg-[#a9dbe6]' : 'bg-[#b4b4b4]'}`}
      >
        <Icon name={name} />
      </button>
    ))}
    <span className="ml-auto w-[190px] text-[9px] leading-4 text-black">模型</span>
    <button type="button" aria-label="bulb" className="flex h-4 w-5 items-center justify-center border border-gray-500 bg-[#a8a8a8]">
      <Icon name="bulb" />
    </button>
    <Caret className="mr-1 ml-1 text-black" />
    <button type="button" aria-label="全屏显示" className="mr-1 h-2.5 w-3 border border-t-2 border-gray-600 bg-white" />
  </div>
);

const PaintIcon = () => (
  <svg viewBox="0 0 20 20" className="size-[18px]">
    <path d="M2 12q0-7 8-8 8 0 7 6-1 3-5 3-2 0-2 3t-4 2q-4-2-4-6z" fill="#e6ebef" stroke="#8ba4b5" />
    <circle cx="6" cy="10" r="1.500" fill="#3d86cf" />
    <circle cx="9" cy="7" r="1.500" fill="#5bb04c" />
    <circle cx="13" cy="8" r="1.500" fill="#d84b3d" />
    <circle cx="6" cy="14" r="1.500" fill="#e5b43a" />
    <path d="M12 14l5-12" stroke="#c98c3a" strokeWidth="2.500" />
  </svg>
);

const EdgeIcon = () => (
  <svg viewBox="0 0 20 20" className="size-[18px]">
    <path d="M2 9Q4 1 11 1.500q7 .5 7.500 7.500v3H7q.5 4 5 4 3 0 5.500-1.500v3.500Q15 19 11 19q-8-.5-8-7 0-4 4-6.500-2 2-2 3.500h8q-.5-3.500-4-3.500Q5 5.500 2 9z" fill="#1583e0" />
  </svg>
);

const Taskbar = () => (
  <footer className="flex h-[29px] shrink-0 bg-[#06151b] text-white">
    <button type="button" aria-label="开始" className="flex w-[35px] items-center justify-center">
      <svg viewBox="0 0 14 14" className="size-3.5">
        <path d="M1 2.500l5-.7v4.700H1zM7 1.600l6-.9v5.800H7zM1 7.500h5v4.700l-5-.7zM7 7.500h6v5.800l-6-.9z" fill="#fff" />
      </svg>
    </button>
    <label className="flex w-[252px] items-center bg-[#f1f1f1] px-[7px]">
      <span className="size-[15px] rounded-full border-2 border-[#222]" />
      <input
        aria-label="搜索"
        placeholder="在这里输入你要搜索的内容"
        className="ml-[7px] min-w-0 flex-1 text-[10px] placeholder:text-[#444]"
      />
      <svg viewBox="0 0 12 16" className="mr-0.5 h-3.5 w-3" fill="none" stroke="#444" strokeWidth="1.200">
        <path d="M4 2q2-2 4 0v7q-2 2-4 0zM2 8q0 4 4 4t4-4M6 12v3" />
      </svg>
    </label>
    <div className="ml-0.5 flex gap-1">
      <button type="button" aria-label="AutoCAD" className="flex w-[35px] items-center justify-center border-b-2 border-[#76c5dc] bg-[#3a464a]">
        <svg viewBox="0 0 20 20" className="size-[18px]">
          <path d="M3 2h13v14H3z" fill="#85888a" />
          <path d="M8 12h10v6H8z" fill="#eee" />
          <path d="M8 3l3 1 5 9-4 1-2-1-4 3-3-2z" fill="#d3232a" />
        </svg>
      </button>
      <button type="button" aria-label="画图" className="flex w-[29px] items-center justify-center border-b-2 border-[#76c5dc]"><PaintIcon /></button>
      <button type="button" aria-label="Edge" className="ml-[3px] flex w-[29px] items-center justify-center border-b-2 border-[#76c5dc]"><EdgeIcon /></button>
    </div>
    <div className="ml-auto flex items-center gap-2">
      <Chevron d="M1 5l3-3 3 3" className="size-2.5" />
      <svg viewBox="0 0 12 10" className="h-2.5 w-3"><path d="M1 1h10v8H1z" fill="#eee" /></svg>
      <Chevron d="M1 7l5-5M4 7l3-3M6 7l1-1" className="size-2.5" />
      <Chevron d="M1 3h1l2-2v6L2 5H1zM5 3q1 1 0 2M6 1q2 3 0 6" className="size-3" />
      <svg viewBox="0 0 12 12" className="size-3"><path d="M1 1h10v8l-3 2H1z" fill="#44b549" /></svg>
    </div>
    <div className="w-16 pt-0.5 pl-0.5 text-center text-[9px] leading-[13px]">
      <p>12:24</p>
      <p>2019/1/10</p>
    </div>
  </footer>
);

const Watermark = () => (
  <div className="absolute right-[55px] bottom-[15px] flex h-[85px] w-[180px] items-center gap-[13px] bg-[#233158] pl-[15px] text-[#d3d5de]">
    <svg viewBox="0 0 34 36" className="h-9 w-[34px] shrink-0" fill="none" stroke="currentColor" strokeWidth="2.600" strokeLinejoin="round" strokeLinecap="round">
      <path d="M2 5v23q1 6 7 5l19-9q6-4 3-9L16 3Q8-1 7 7v19q1 3 4 1" />
      <path d="M14 13l7 4.500-7 4.500z" fill="currentColor" stroke="none" />
      <path d="M23 14v7" strokeWidth="2" />
    </svg>
    <div>
      <p className="flex gap-1 text-[23px] leading-7 font-medium">
        <span>溜</span>
        <span>溜</span>
        <span>自</span>
        <span>学</span>
      </p>
      <p className="font-['DejaVu_Sans',sans-serif] text-[12px] leading-[14px]">zixue.3D66.COM</p>
    </div>
  </div>
);

const App = () => {
  return (
    <div className={`relative flex h-screen flex-col overflow-hidden bg-[#686868] ${font}`}>
      <header className="shrink-0">
        <div className="flex">
          <button type="button" aria-label="应用程序菜单" className="flex w-[30px] shrink-0 items-center border border-[#555] bg-linear-to-b from-[#b4b4b4] to-[#777]">
            <AppLogo className="size-[22px]" />
            <Caret className="-ml-px text-black" />
          </button>
          <div className="min-w-0 flex-1">
            <TitleBar />
            <MenuBar />
          </div>
        </div>
        <ToolbarRows />
      </header>

      <div className="flex min-h-0 flex-1">
        <aside className="w-[22px] shrink-0 border-r-2 border-[#8e8e8e]">
          <Grip />
          <ToolColumn tools={drawTools} />
        </aside>
        <main className="relative flex min-w-0 flex-1 flex-col">
          <div className="flex min-h-0 flex-1">
            <Drawing />
            <div className="flex w-[13px] shrink-0 flex-col items-center bg-[#f0f0f0] py-1 text-[#333]">
              <Chevron d="M1 5l3-3 3 3" />
              <span className="mt-0.5 h-3 w-[11px] bg-[#cdcdcd]" />
              <Chevron className="mt-auto size-2" />
            </div>
          </div>
          <LayoutTabs />
          <WizardDialog />
        </main>
        <aside className="w-6 shrink-0 overflow-hidden border-l-2 border-[#555] pl-0.5">
          <Grip />
          <ToolColumn tools={modifyTools} />
          <Grip />
          <div className="mt-0.5">
            <ToolColumn tools={['front', 'back', 'above', 'under']} />
            <div className="h-1 w-[17px] border-b border-gray-400 bg-[#f0f0f0]" />
            <ToolColumn tools={['annoFront', 'hatchBack']} />
          </div>
        </aside>
      </div>

      <CommandLine />
      <StatusBar />
      <Taskbar />

      <svg className="pointer-events-none absolute inset-0 size-full" fill="none" stroke="#7d0a1e" strokeWidth="3.600" strokeLinecap="round">
        <path d="M830 153L648 411M651 378l-5 33M690 397l-57 18" />
        <g fill="#e3d5da" stroke="none">
          <circle cx="848" cy="461" r="5" />
          <circle cx="864" cy="462" r="5" />
        </g>
      </svg>
      <Watermark />
    </div>
  );
};

export default App;
